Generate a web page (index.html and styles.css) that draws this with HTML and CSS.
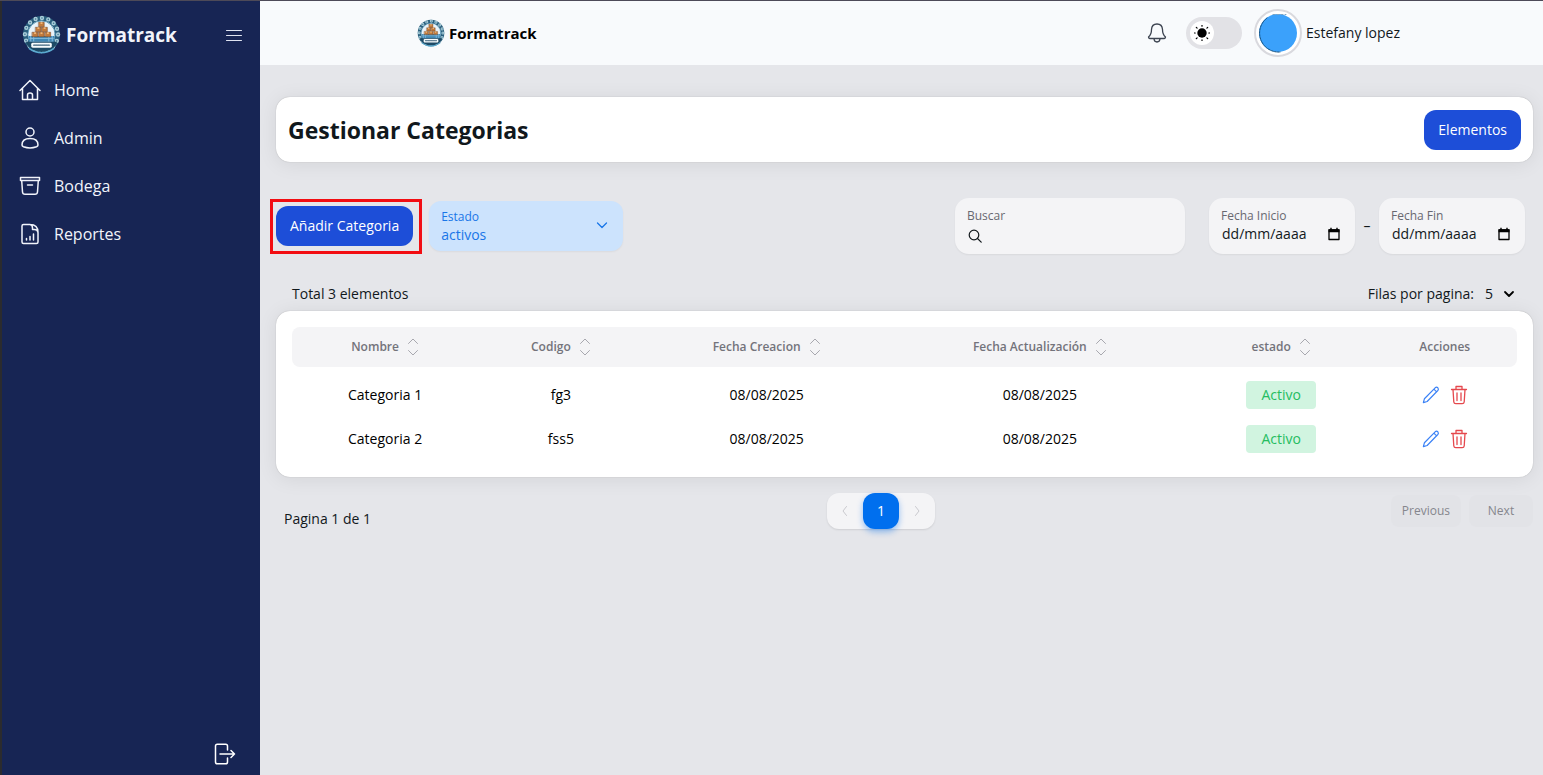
FILE: index.html
```html
<!DOCTYPE html>
<html lang="es">
<head>
<meta charset="utf-8">
<meta name="viewport" content="width=device-width, initial-scale=1">
<title>Formatrack - Gestionar Categorias</title>
<link rel="stylesheet" href="styles.css">
</head>
<body>
<svg class="defs" aria-hidden="true">
  <symbol id="logo" viewBox="0 0 40 40">
    <circle cx="20" cy="20" r="16.500" fill="#dcebf3" stroke="#2a5f7d" stroke-width="5"/>
    <circle cx="20" cy="20" r="17" fill="none" stroke="#a9ccd8" stroke-width="4.500" stroke-linecap="round" stroke-dasharray="0 6.675"/>
    <circle cx="20" cy="20" r="17" fill="none" stroke="#3c7492" stroke-width="1.600" stroke-linecap="round" stroke-dasharray="0 6.675"/>
    <circle cx="20" cy="20" r="14" fill="#e9f3f9" stroke="#3a82a5" stroke-width=".8"/>
    <path d="M7 21.500h26v6H7z" fill="#3f87b5"/>
    <path d="M9 22v5M12 22v5M27.500 22v5M31 22v5M8 24h24" stroke="#86bddd" fill="none"/>
    <g fill="#c17a3c" stroke="#6e3c1b" stroke-width=".5">
      <path d="M17.200 7.500h5.600v4.600h-5.600zM14 12.600h5.600v4.600H14zM20.400 12.600H26v4.600h-5.600zM10.600 17.700h5.600v4.600h-5.600zM17.200 17.700h5.600v4.600h-5.600zM23.800 17.700h5.600v4.600h-5.600z"/>
    </g>
    <path d="M19 7.500h2v1.800h-2zM15.800 12.600h2v1.800h-2zM22.200 12.600h2v1.800h-2zM12.400 17.700h2v1.800h-2zM19 17.700h2v1.800h-2zM25.600 17.700h2v1.800h-2z" fill="#f0b574"/>
    <path d="M4 27.500h32q-2 6-6 8-10 5-20 0-4-2-6-8z" fill="#1d4a66"/>
    <path d="M7.500 34.500q12.500 8.500 25 0" stroke="#5aaad0" stroke-width="1.600" fill="none"/>
    <rect x="9.500" y="28.500" width="21" height="5" rx="1.500" fill="#f8fcfd"/>
    <path d="M12 31h16" stroke="#3b617b" stroke-width="1.300" stroke-dasharray="1.500 .6"/>
  </symbol>
  <symbol id="sort" viewBox="0 0 12 18"><path d="M1.500 5.500 6 1l4.500 4.500M1.500 12.500 6 17l4.500-4.500"/></symbol>
  <symbol id="calendar" viewBox="0 0 14 14"><path d="M2 3h10v9.500H2z" fill="none" stroke="#000" stroke-width="1.300"/><path d="M1.500 2.300h11v3h-11zM3.300.7h1.400v2H3.300zM9.300.7h1.400v2H9.300z" fill="#000"/></symbol>
  <symbol id="pencil" viewBox="0 0 20 20"><path d="M1.500 18.500 2.700 14.200 14.600 2q1.600-1.300 3 0 1.300 1.500 0 3L5.700 17.200zM13.200 3.500l3 3"/></symbol>
  <symbol id="trash" viewBox="0 0 18 20"><path d="M1.500 4.500h15M6 4.500v-3h6v3M3 4.500 3.800 17q.2 1.700 2 1.700h6.400q1.800 0 2-1.700L15 4.500M7 8v7.500M11 8v7.500"/></symbol>
</svg>
<div class="app">
  <aside class="sidebar">
    <div class="brand-row">
      <div class="brand"><svg class="brand-logo"><use href="#logo"/></svg><span>Formatrack</span></div>
      <button class="icon-button" aria-label="Menu"><svg class="burger" viewBox="0 0 16 12"><path d="M.5 1.500h15M.5 6.500h15M.5 11.500h15"/></svg></button>
    </div>
    <nav class="nav">
      <a href="#"><svg viewBox="0 0 22 22"><path d="M1 11.500 11 1.500l10 10M3.500 9.500V20.500h15V9.500M8.500 20.500v-4.500q0-2 2.500-2t2.500 2v4.500"/></svg>Home</a>
      <a href="#"><svg viewBox="0 0 22 22"><circle cx="11" cy="5" r="4"/><path d="M3 18q0-6.500 8-6.500t8 6.500q0 1.200-1.500 1.800-6.500 2.400-13 0Q3 19.200 3 18z"/></svg>Admin</a>
      <a href="#"><svg viewBox="0 0 22 22"><path d="M1.500 2.500h19v3h-19zM2.700 5.500 3.500 17q.2 2.300 2.500 2.300h10q2.300 0 2.500-2.300l.8-11.500M8.500 10h5"/></svg>Bodega</a>
      <a href="#"><svg viewBox="0 0 22 22"><path d="M11 1.500H4.500q-1.500 0-1.500 1.500v16q0 1.500 1.500 1.500h13q1.500 0 1.500-1.500v-9.500q0-8-8-8zM11 1.500q2.500.4 2.500 3.500v1.500h2q3 0 3.500 3M7.500 17v-1.500M11 17v-3.500M14.500 17v-6"/></svg>Reportes</a>
    </nav>
    <button class="icon-button logout" aria-label="Cerrar sesión"><svg viewBox="0 0 22 22"><path d="M13.500 7V3q0-1.800-1.800-1.800H3.300Q1.500 1.200 1.500 3v16q0 1.800 1.800 1.800h8.400q1.800 0 1.800-1.800v-4M6 11h14.500M17 7.500l3.500 3.500-3.500 3.500"/></svg></button>
  </aside>
  <div class="content">
    <header class="topbar">
      <div class="top-brand"><svg class="top-logo"><use href="#logo"/></svg><span>Formatrack</span></div>
      <div class="user-area">
        <button class="icon-button" aria-label="Notificaciones"><svg class="bell" viewBox="0 0 20 20"><path d="M10 1Q4.800 1 4.500 6.500q0 5-3 7.500 0 1.300 1.300 1.500h14.400q1.300-.2 1.300-1.500-3-2.500-3-7.500Q15.200 1 10 1zM7 16q.3 3 3 3t3-3"/></svg></button>
        <button class="theme" role="switch" aria-checked="false" aria-label="Tema"><span class="knob"><svg viewBox="0 0 16 16"><circle cx="8" cy="8" r="4.700"/><path d="M8 0v1.200M8 14.800V16M0 8h1.200M14.800 8H16M2.300 2.300l.8.8M12.900 12.900l.8.8M2.300 13.700l.8-.8M12.900 3.100l.8-.8" stroke="#000" stroke-width="1.200"/></svg></span></button>
        <span class="avatar"><svg viewBox="0 0 40 40"><circle cx="20" cy="20" r="19" fill="#3ba1fb"/><path d="M9 5A19 19 0 0 0 22 39" fill="none" stroke="#16517e" stroke-dasharray="2 1"/><path d="M15 1.500h13" stroke="#7ba4c4" stroke-dasharray="2 2"/></svg></span>
        <span class="user-name">Estefany lopez</span>
      </div>
    </header>
    <main class="main">
      <section class="title-card"><h1>Gestionar Categorias</h1><button class="primary">Elementos</button></section>
      <section class="filters">
        <span class="highlight"><button class="primary">Añadir Categoria</button></span>
        <div class="state-field"><label for="state">Estado</label><select id="state"><option>activos</option><option>inactivos</option></select><svg viewBox="0 0 12 12"><path d="m1.500 4 4.500 4.500L10.500 4"/></svg></div>
        <div class="field search"><label for="search">Buscar</label><div class="control"><svg class="lens" viewBox="0 0 14 14"><circle cx="6" cy="6" r="4.800"/><path d="m9.500 9.500 3.700 3.700"/></svg><input id="search" type="search"></div></div>
        <div class="dates">
          <div class="field date"><label for="start">Fecha Inicio</label><div class="control"><input id="start" type="text" placeholder="dd/mm/aaaa"><button class="icon-button" aria-label="Elegir fecha inicio"><svg class="calendar"><use href="#calendar"/></svg></button></div></div>
          <span class="dash">–</span>
          <div class="field date"><label for="end">Fecha Fin</label><div class="control"><input id="end" type="text" placeholder="dd/mm/aaaa"><button class="icon-button" aria-label="Elegir fecha fin"><svg class="calendar"><use href="#calendar"/></svg></button></div></div>
        </div>
      </section>
      <div class="summary"><span>Total 3 elementos</span><div class="page-size"><label for="size">Filas por pagina:</label><select id="size"><option>5</option><option>10</option></select><svg viewBox="0 0 12 12"><path d="m2 4 4 4 4-4"/></svg></div></div>
      <section class="table-card">
        <table>
          <colgroup><col class="c-name"><col class="c-code"><col class="c-created"><col class="c-updated"><col class="c-state"><col class="c-actions"></colgroup>
          <thead><tr>
            <th><span class="heading">Nombre<svg class="sort"><use href="#sort"/></svg></span></th>
            <th><span class="heading">Codigo<svg class="sort"><use href="#sort"/></svg></span></th>
            <th><span class="heading">Fecha Creacion<svg class="sort"><use href="#sort"/></svg></span></th>
            <th><span class="heading">Fecha Actualización<svg class="sort"><use href="#sort"/></svg></span></th>
            <th><span class="heading">estado<svg class="sort"><use href="#sort"/></svg></span></th>
            <th><span class="heading">Acciones</span></th>
          </tr></thead>
          <tbody>
            <tr><td>Categoria 1</td><td>fg3</td><td>08/08/2025</td><td>08/08/2025</td><td><span class="badge">Activo</span></td><td><div class="actions"><button class="icon-button edit" aria-label="Editar"><svg><use href="#pencil"/></svg></button><button class="icon-button delete" aria-label="Eliminar"><svg><use href="#trash"/></svg></button></div></td></tr>
            <tr><td>Categoria 2</td><td>fss5</td><td>08/08/2025</td><td>08/08/2025</td><td><span class="badge">Activo</span></td><td><div class="actions"><button class="icon-button edit" aria-label="Editar"><svg><use href="#pencil"/></svg></button><button class="icon-button delete" aria-label="Eliminar"><svg><use href="#trash"/></svg></button></div></td></tr>
          </tbody>
        </table>
      </section>
      <footer class="table-footer">
        <span class="page-text">Pagina 1 de 1</span>
        <nav class="pager" aria-label="Paginas">
          <button aria-label="Anterior" disabled><svg viewBox="0 0 12 12"><path d="M7.500 1.500 4 6l3.500 4.500"/></svg></button>
          <button class="current">1</button>
          <button aria-label="Siguiente" disabled><svg viewBox="0 0 12 12"><path d="M4.500 1.500 8 6l-3.500 4.500"/></svg></button>
        </nav>
        <div class="steps"><button disabled>Previous</button><button disabled>Next</button></div>
      </footer>
    </main>
  </div>
</div>
</body>
</html>
```

FILE: styles.css
```css
* { box-sizing: border-box; }
body {
  margin: 0;
  border-top: 1px solid #4d4a58;
  background: #e5e6ea;
  color: #11181c;
  font: 14px/20px "Open Sans", "Noto Sans", sans-serif;
}
button, input, select { font: inherit; color: inherit; }
button, input, select { margin: 0; padding: 0; border: 0; background: none; }
svg { display: block; flex: none; fill: none; stroke-linecap: round; stroke-linejoin: round; }
.defs { position: absolute; width: 0; height: 0; }
.icon-button { display: flex; }
.app { display: flex; min-height: calc(100vh - 1px); }

.sidebar {
  display: flex;
  flex-direction: column;
  flex: 0 0 260px;
  padding: 14px 18px 10px 17px;
  border-left: 2px solid #2b2b2e;
  background: #172554;
  color: #f1f4fb;
}
.brand-row { display: flex; align-items: center; justify-content: space-between; padding-left: 3px; }
.brand { display: flex; align-items: center; gap: 5px; font-size: 19px; font-weight: 700; }
.brand-logo { width: 39px; height: 39px; }
.burger { width: 16px; height: 12px; stroke: #dfe4f1; stroke-width: 1; }
.nav { display: flex; flex-direction: column; gap: 24px; margin-top: 24px; }
.nav a { display: flex; align-items: center; gap: 13px; height: 24px; color: inherit; font-size: 16px; font-weight: 500; text-decoration: none; }
.nav svg { width: 22px; height: 22px; stroke: currentColor; stroke-width: 1.500; }
.logout { align-self: flex-end; margin-top: auto; margin-right: 6px; }
.logout svg { width: 22px; height: 22px; stroke: #fff; stroke-width: 1.500; }

.content { flex: 1; min-width: 0; }
.topbar { display: flex; align-items: center; justify-content: space-between; height: 64px; padding: 0 143px 0 157px; background: #f8fafc; }
.top-brand { display: flex; align-items: center; gap: 4px; color: #000; font-size: 15px; font-weight: 700; }
.top-logo { width: 28px; height: 28px; }
.user-area { display: flex; align-items: center; }
.bell { width: 20px; height: 20px; stroke: #3c4350; stroke-width: 1.300; }
.theme { width: 56px; height: 32px; margin: 0 12px 0 19px; padding: 4px; border-radius: 16px; background: #e2e2e6; }
.knob { display: grid; place-items: center; width: 24px; height: 24px; border-radius: 50%; background: #fff; }
.knob svg { width: 16px; height: 16px; fill: #000; }
.avatar { display: grid; place-items: center; width: 48px; height: 48px; border: 2px solid #d9d9de; border-radius: 50%; background: #fff; }
.avatar svg { width: 40px; height: 40px; }
.user-name { margin-left: 4px; }

.main { padding: 32px 10px 32px 16px; }
.title-card, .table-card { background: #fff; border-radius: 14px; box-shadow: 0 0 1px rgba(0,0,0,.3), 0 2px 20px rgba(0,0,0,.08); }
.title-card { display: flex; align-items: center; justify-content: space-between; min-height: 65px; padding: 12px; }
h1 { margin: 0; font-size: 23px; line-height: 32px; font-weight: 700; }
.primary { height: 40px; padding: 0 14px; border-radius: 12px; background: #1d4ed8; color: #fff; white-space: nowrap; }
.filters { display: flex; align-items: center; gap: 16px; margin-top: 36px; padding-right: 8px; }
.highlight { position: relative; }
.highlight::after { content: ""; position: absolute; inset: -7px -9px -8px -6px; border: 3px solid #f20d12; pointer-events: none; }
.state-field { position: relative; width: 194px; padding: 7px 12px; border-radius: 12px; background: #cce3fd; color: #1976e8; box-shadow: 0 1px 2px rgba(0,0,0,.05); }
label { display: block; }
.state-field label, .field label { font-size: 12px; line-height: 17px; }
.state-field select { display: block; width: 100%; height: 19px; appearance: none; }
.state-field svg { position: absolute; top: 18px; right: 15px; width: 12px; height: 12px; stroke: currentColor; stroke-width: 1.300; pointer-events: none; }
.field { height: 56px; padding: 9px 12px; border-radius: 14px; background: #f4f4f6; box-shadow: 0 1px 2px rgba(0,0,0,.06); }
.field label { color: #686870; }
.search { width: 230px; margin-left: auto; }
.control { display: flex; align-items: center; gap: 6px; height: 20px; }
.control input { flex: 1; min-width: 0; width: 100%; outline: 0; appearance: none; }
.control input::placeholder { color: #11181c; opacity: 1; }
.lens { width: 14px; height: 14px; margin: 4px 0 0 1px; stroke: #11181c; stroke-width: 1.200; }
.dates { display: flex; align-items: center; gap: 8px; margin-left: 8px; }
.date { width: 146px; padding-right: 14px; }
.date .control { padding-left: 1px; }
.dash { width: 8px; text-align: center; }
.calendar { width: 14px; height: 14px; }
.summary { display: flex; align-items: center; justify-content: space-between; margin-top: 30px; padding: 0 16px; }
.page-size { position: relative; display: flex; align-items: center; }
.page-size select { width: 32px; margin-left: 11px; appearance: none; }
.page-size svg { position: absolute; right: 2px; width: 12px; height: 12px; stroke: #000; stroke-width: 1.800; pointer-events: none; }
.table-card { margin-top: 7px; padding: 16px; }
table { width: 100%; table-layout: fixed; border-collapse: separate; border-spacing: 0; text-align: center; }
.c-name { width: 15.2%; }
.c-code { width: 13.5%; }
.c-created { width: 20.1%; }
.c-updated { width: 24.5%; }
.c-state { width: 14.9%; }
.c-actions { width: 11.8%; }
th { height: 40px; padding: 0; background: #f4f4f6; color: #73737b; font-size: 12px; font-weight: 600; }
th:first-child { border-radius: 8px 0 0 8px; }
th:last-child { border-radius: 0 8px 8px 0; }
.heading { display: flex; align-items: center; justify-content: center; gap: 8px; }
.sort { width: 12px; height: 18px; stroke: #a8a8af; stroke-width: 1; }
td { height: 44px; padding: 0; }
tbody { color: #000; }
tbody::before { content: ""; display: table-row; height: 6px; }
.badge { display: inline-block; padding: 4px 15px; border-radius: 4px; background: #d1f4e0; color: #24bd60; }
.actions { display: flex; justify-content: center; gap: 10px; }
.actions svg { width: 18px; height: 20px; stroke: currentColor; stroke-width: 1.300; }
.edit { color: #3b82f6; }
.delete { color: #e5484d; }
.table-footer { display: flex; align-items: center; justify-content: space-between; margin-top: 16px; }
.page-text { padding: 16px 0 0 8px; }
.pager { display: flex; height: 36px; border-radius: 12px; background: #f4f4f6; box-shadow: 0 1px 2px rgba(0,0,0,.1); }
.pager button { display: grid; place-items: center; width: 36px; height: 36px; }
.pager svg { width: 12px; height: 12px; stroke: #c9c9ce; }
.pager .current { border-radius: 12px; background: #006fee; color: #fff; box-shadow: 0 3px 6px rgba(0,111,238,.4); }
.steps { display: flex; gap: 8px; }
.steps button { min-width: 64px; height: 32px; padding: 0 11px; border-radius: 8px; background: #e2e3e7; color: #85868d; font-size: 12px; }
```
